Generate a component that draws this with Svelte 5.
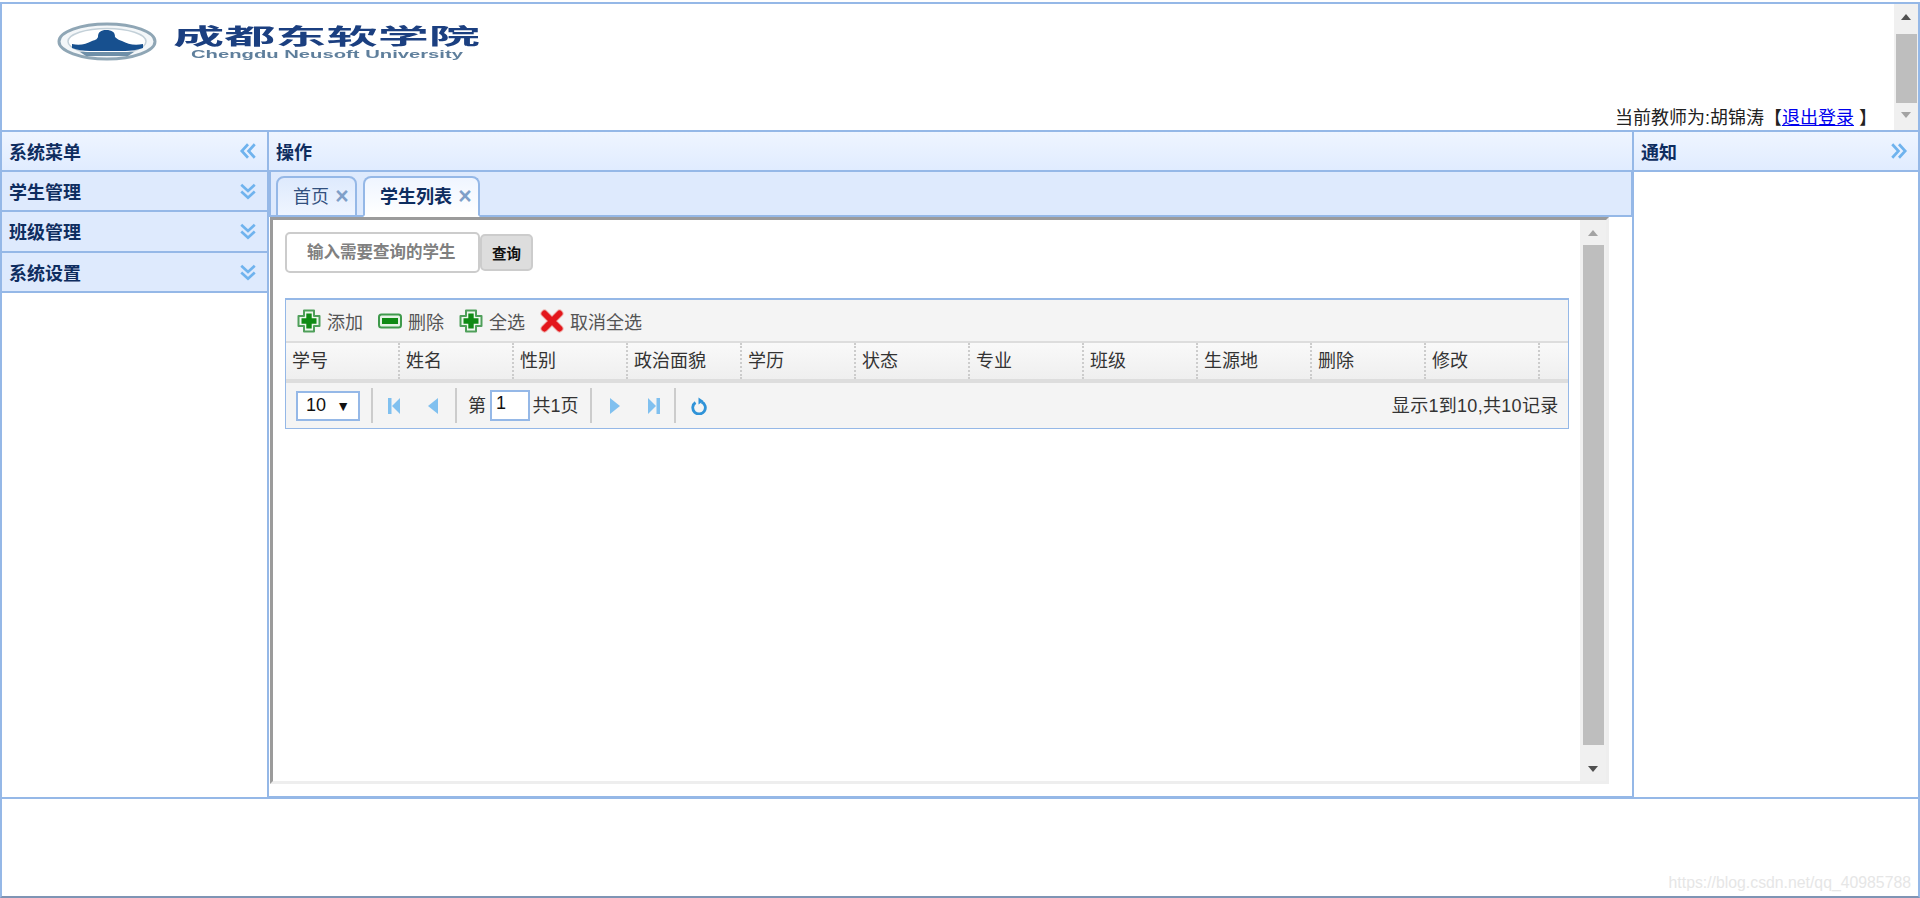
<script lang="ts">
  const menus = ['学生管理', '班级管理', '系统设置'];
  const columns = ['学号', '姓名', '性别', '政治面貌', '学历', '状态', '专业', '班级', '生源地', '删除', '修改'];
</script>

{#snippet plusIcon()}
  <svg class="tool-icon" viewBox="0 0 24 24">
    <path d="M7 1.500h10v5.500h5.500v10H17v5.500H7V17H1.500V7H7z" fill="#eef7ee" stroke="#4f9f5a" stroke-width="2" stroke-linejoin="round" />
    <path d="M9.300 4.500h5.400v4.800h4.800v5.400h-4.800v4.800H9.300v-4.800H4.500V9.300h4.800z" fill="#0f8a14" />
  </svg>
{/snippet}

{#snippet chevrons(d)}
  <svg class="chev" viewBox="0 0 16 16"><path {d} fill="none" stroke="#6fb3ee" stroke-width="2.400" /></svg>
{/snippet}

<div class="page">
  <div class="frame">
    <header class="top">
      <div class="top-main">
        <svg class="logo" viewBox="0 0 460 50" aria-label="成都东软学院">
          <g class="logo-soft">
            <ellipse cx="53" cy="27.500" rx="48" ry="17.500" fill="#f4f7f9" stroke="#8fa6b5" stroke-width="3" />
            <ellipse cx="53" cy="27.500" rx="39" ry="13" fill="#fff" stroke="#c3d0d8" stroke-width="1.500" />
            <path d="M18 30c8 2 14 0 20-3 4-1 5-2 6-4 0-5 3-7 8-7 6 0 9 2 9 7 2 2 4 3 7 4 6 3 12 5 21 3v4c-6 2-12 3-18 3H36c-7 0-13-1-18-3z" fill="#17508f" />
            <path d="M26 38h54l-6 4H32z" fill="#6e8fa8" />
          </g>
          <text class="logo-cn" x="119" y="30" textLength="307" lengthAdjust="spacingAndGlyphs">成都东软学院</text>
          <text class="logo-en" x="137" y="44" textLength="272" lengthAdjust="spacingAndGlyphs">Chengdu Neusoft University</text>
        </svg>
        <div class="teacher">当前教师为:胡锦涛【<a href="#logout">退出登录</a> 】</div>
      </div>
      <div class="vscroll header-scroll">
        <span class="arrow up dark"></span>
        <span class="thumb"></span>
        <span class="arrow down light"></span>
      </div>
    </header>

    <main class="body">
      <aside class="west">
        <div class="panel-head">
          <span>系统菜单</span>
          {@render chevrons('M8 2L2.500 8 8 14M14 2L8.500 8 14 14')}
        </div>
        {#each menus as menu}
          <div class="menu-row">
            <span>{menu}</span>
            {@render chevrons('M2 2.500l6 5.500 6-5.500M2 8.500l6 5.500 6-5.500')}
          </div>
        {/each}
      </aside>

      <section class="center">
        <div class="panel-head"><span>操作</span></div>
        <div class="tabs">
          <div class="tab">首页<span class="close">×</span></div>
          <div class="tab active">学生列表<span class="close">×</span></div>
        </div>
        <div class="frame-wrap">
          <div class="inset">
            <div class="content">
              <div class="search">
                <div class="search-input">输入需要查询的学生</div>
                <button class="search-btn">查询</button>
              </div>

              <div class="grid">
                <div class="toolbar">
                  <div class="tool">{@render plusIcon()}添加</div>
                  <div class="tool">
                    <svg class="tool-icon" viewBox="0 0 24 24">
                      <rect x="1" y="5.500" width="22" height="13" rx="2.500" fill="#e6f3e6" stroke="#3f9a4c" stroke-width="2" />
                      <rect x="4" y="9" width="16" height="6" fill="#0f8a14" />
                    </svg>
                    删除
                  </div>
                  <div class="tool">{@render plusIcon()}全选</div>
                  <div class="tool">
                    <svg class="tool-icon" viewBox="0 0 24 24">
                      <path d="M4.500 4.500l15 15M19.500 4.500l-15 15" fill="none" stroke="#eeb4b0" stroke-width="8" stroke-linecap="round" />
                      <path d="M4.500 4.500l15 15M19.500 4.500l-15 15" fill="none" stroke="#e3161b" stroke-width="6" stroke-linecap="round" />
                    </svg>
                    取消全选
                  </div>
                </div>

                <div class="thead">
                  {#each columns as col}
                    <div class="th">{col}</div>
                  {/each}
                </div>

                <div class="pager">
                  <div class="page-size"><span>10</span><span class="caret">▼</span></div>
                  <span class="sep"></span>
                  <svg class="pg first" viewBox="0 0 12 16"><path d="M0 0h3.500v16H0zM12 0v16L4 8z" fill="#80c0ef" /></svg>
                  <svg class="pg prev" viewBox="0 0 10 16"><path d="M10 0v16L0 8z" fill="#80c0ef" /></svg>
                  <span class="sep"></span>
                  <span class="pg-label">第</span>
                  <div class="pg-input">1</div>
                  <span class="pg-total">共1页</span>
                  <span class="sep"></span>
                  <svg class="pg next" viewBox="0 0 10 16"><path d="M0 0v16l10-8z" fill="#80c0ef" /></svg>
                  <svg class="pg last" viewBox="0 0 12 16"><path d="M8.500 0H12v16H8.500zM0 0v16l8-8z" fill="#80c0ef" /></svg>
                  <span class="sep"></span>
                  <svg class="pg refresh" viewBox="0 0 16 18">
                    <path d="M4.500 5.500a6.300 6.300 0 1 0 6 -.6" fill="none" stroke="#2f93d8" stroke-width="2.800" />
                    <path d="M7.500 0.500v7l5-3.500z" fill="#2f93d8" />
                  </svg>
                  <span class="summary">显示1到10,共10记录</span>
                </div>
              </div>
            </div>
            <div class="vscroll frame-scroll">
              <span class="arrow up light"></span>
              <span class="thumb"></span>
              <span class="arrow down dark"></span>
            </div>
          </div>
        </div>
      </section>

      <aside class="east">
        <div class="panel-head">
          <span>通知</span>
          {@render chevrons('M2 2l5.500 6L2 14M8 2l5.500 6L8 14')}
        </div>
      </aside>
    </main>

    <footer class="foot"></footer>
  </div>
  <div class="watermark">https://blog.csdn.net/qq_40985788</div>
</div>

<style>
  :global(body) {
    margin: 0;
    background: #fff;
  }

  .page {
    position: relative;
    box-sizing: border-box;
    height: 898px;
    padding-top: 2px;
    font-family: "Liberation Sans", "Noto Sans CJK SC", sans-serif;
    font-size: 18px;
    color: #222;
    overflow: hidden;
  }

  .frame {
    box-sizing: border-box;
    height: 896px;
    display: flex;
    flex-direction: column;
    border: 2px solid #95b8e7;
    border-bottom-color: #7f94b4;
  }

  /* header */
  .top {
    height: 126px;
    display: flex;
    border-bottom: 2px solid #95b8e7;
    flex: none;
  }

  .top-main {
    flex: 1;
    display: flex;
    flex-direction: column;
    justify-content: space-between;
    padding: 10px 0 0 0;
    min-width: 0;
  }

  .logo {
    display: block;
    width: 460px;
    height: 50px;
    margin-left: 52px;
  }

  .logo-soft,
  .logo-cn,
  .logo-en {
    filter: blur(0.5px);
  }

  .logo-cn {
    font-family: "Noto Sans CJK SC", sans-serif;
    font-size: 22px;
    font-weight: 700;
    fill: #1b3f80;
  }

  .logo-en {
    font-family: "Liberation Sans", sans-serif;
    font-size: 10px;
    font-weight: 700;
    fill: #5f7f9c;
  }

  .teacher {
    align-self: flex-end;
    margin-right: 17px;
    line-height: 23px;
    color: #222;
    white-space: pre;
  }

  .teacher a {
    color: #0000ee;
  }

  .vscroll {
    box-sizing: border-box;
    width: 24px;
    flex: none;
    background: #f0f0f0;
    display: flex;
    flex-direction: column;
    align-items: center;
  }

  .thumb {
    display: block;
    width: 21px;
    background: #bebebe;
  }

  .arrow {
    display: block;
    width: 0;
    height: 0;
    border-left: 5.500px solid transparent;
    border-right: 5.500px solid transparent;
  }

  .arrow.up.dark {
    border-bottom: 6px solid #505050;
  }

  .arrow.up.light {
    border-bottom: 6px solid #a3a3a3;
  }

  .arrow.down.dark {
    border-top: 6px solid #505050;
  }

  .arrow.down.light {
    border-top: 6px solid #a3a3a3;
  }

  .header-scroll .up {
    margin-top: 10px;
  }

  .header-scroll .thumb {
    height: 69px;
    margin: 14px 0 9px;
  }

  .frame-scroll {
    width: 26px;
  }

  .frame-scroll .up {
    margin-top: 10px;
  }

  .frame-scroll .thumb {
    height: 500px;
    margin: 9px 0 21px;
  }

  /* three columns */
  .body {
    flex: 1;
    min-height: 0;
    display: grid;
    grid-template-columns: 265px 1367px 1fr;
  }

  .panel-head {
    box-sizing: border-box;
    height: 40px;
    padding: 0 10px 0 7px;
    display: flex;
    align-items: center;
    justify-content: space-between;
    border-bottom: 2px solid #95b8e7;
    background: linear-gradient(to bottom, #eff5ff, #e0ecff);
    color: #0e2d5f;
    font-weight: 700;
  }

  .chev {
    display: block;
    width: 18px;
    height: 18px;
    flex: none;
  }

  .menu-row {
    box-sizing: border-box;
    height: 40.300px;
    padding: 0 10px 0 7px;
    display: flex;
    align-items: center;
    justify-content: space-between;
    border-bottom: 2px solid #95b8e7;
    background: #deeafd;
    color: #0e2d5f;
    font-weight: 700;
  }

  .center {
    display: flex;
    flex-direction: column;
    min-height: 0;
    margin-bottom: -1px;
    border-left: 2px solid #95b8e7;
    border-right: 2px solid #95b8e7;
    border-bottom: 2px solid #95b8e7;
  }

  .tabs {
    box-sizing: border-box;
    height: 45px;
    display: flex;
    align-items: flex-end;
    gap: 6px;
    padding-left: 5px;
    margin-right: -1px;
    background: #deeafd;
    border-left: 2px solid #95b8e7;
    border-right: 2px solid #95b8e7;
    border-bottom: 2px solid #95b8e7;
    flex: none;
  }

  .tab {
    box-sizing: border-box;
    height: 41px;
    margin-bottom: -2px;
    padding: 0 8px 0 15px;
    display: flex;
    align-items: center;
    gap: 8px;
    border: 2px solid #95b8e7;
    border-radius: 8px 8px 0 0;
    background: linear-gradient(to bottom, #deeafd, #eff5ff);
    color: #32507e;
    line-height: 34px;
  }

  .tab.active {
    background: linear-gradient(to bottom, #eff5ff, #fff);
    border-bottom-color: #fff;
    color: #0e2d5f;
    font-weight: 700;
  }

  .close {
    width: 10px;
    display: flex;
    justify-content: center;
    font-size: 23px;
    font-weight: 700;
    line-height: 1;
    color: #7f9fc8;
  }

  .frame-wrap {
    flex: 1;
    min-height: 0;
    display: flex;
    padding: 0 23px 12px 1px;
  }

  .inset {
    flex: 1;
    min-width: 0;
    display: flex;
    border: 3px solid;
    border-color: #9b9b9b #eee #eee #9b9b9b;
  }

  .content {
    flex: 1;
    min-width: 0;
    padding: 12px 12px 0 12px;
  }

  .search {
    display: flex;
    align-items: center;
    height: 41px;
  }

  .search-input {
    box-sizing: border-box;
    width: 195px;
    height: 41px;
    padding-left: 20px;
    line-height: 37px;
    border: 2px solid #ccc;
    border-radius: 5px;
    font-size: 16.500px;
    font-weight: 700;
    color: #808080;
    white-space: nowrap;
  }

  .search-btn {
    box-sizing: border-box;
    width: 53px;
    height: 37px;
    padding: 0;
    border: 2px solid #ccc;
    border-radius: 5px;
    background: #ddd;
    font-family: inherit;
    font-size: 14.500px;
    font-weight: 700;
    color: #111;
  }

  .grid {
    box-sizing: border-box;
    margin-top: 25px;
    width: 1284px;
    border: 1px solid #95b8e7;
    border-top-width: 2px;
    background: #f4f4f4;
  }

  .toolbar {
    height: 41px;
    padding-left: 11px;
    display: flex;
    align-items: center;
    gap: 15px;
    color: #555;
  }

  .tool {
    display: flex;
    align-items: center;
    gap: 6px;
  }

  .tool-icon {
    display: block;
    width: 24px;
    height: 24px;
    flex: none;
  }

  .thead {
    box-sizing: border-box;
    height: 42px;
    display: flex;
    border-top: 2px solid #ddd;
    border-bottom: 4px solid #ddd;
    background: linear-gradient(to bottom, #f9f9f9, #efefef);
    color: #333;
  }

  .th {
    box-sizing: border-box;
    width: 114px;
    padding-left: 6px;
    line-height: 36px;
    border-right: 2px dotted #ccc;
    flex: none;
  }

  .pager {
    height: 45px;
    padding-left: 10px;
    display: flex;
    align-items: center;
    color: #333;
  }

  .page-size {
    box-sizing: border-box;
    width: 64px;
    height: 30px;
    padding: 0 8px 0 8px;
    display: flex;
    align-items: center;
    justify-content: space-between;
    border: 2px solid #95b8e7;
    background: #fff;
    color: #111;
  }

  .caret {
    font-size: 14px;
  }

  .sep {
    display: block;
    width: 2px;
    height: 35px;
    background: #ccc;
    flex: none;
  }

  .page-size + .sep {
    margin-left: 11px;
    margin-right: 15px;
  }

  .pg {
    display: block;
    height: 16px;
    flex: none;
  }

  .first,
  .last {
    width: 12px;
  }

  .prev,
  .next {
    width: 10px;
  }

  .first {
    margin-right: 28px;
  }

  .prev {
    margin-right: 17px;
  }

  .prev + .sep {
    margin-right: 11px;
  }

  .pg-label,
  .pg-total,
  .summary {
    padding-bottom: 3px;
  }

  .pg-input {
    box-sizing: border-box;
    width: 40px;
    height: 31px;
    margin: 0 2.500px 0 4px;
    padding-left: 4px;
    line-height: 23px;
    border: 2px solid #95b8e7;
    background: #fff;
    color: #111;
  }

  .pg-total {
    margin-right: 11px;
  }

  .pg-total + .sep {
    margin-right: 18px;
  }

  .next {
    margin-right: 28px;
  }

  .last {
    margin-right: 14px;
  }

  .last + .sep {
    margin-right: 15px;
  }

  .refresh {
    width: 16px;
    height: 18px;
  }

  .summary {
    margin-left: auto;
    padding-right: 9.500px;
    letter-spacing: 0.300px;
  }

  .foot {
    height: 97px;
    flex: none;
    border-top: 2px solid #95b8e7;
  }

  .watermark {
    position: absolute;
    right: 9px;
    bottom: 6px;
    font-size: 15.800px;
    color: #e6e6e6;
    white-space: nowrap;
  }
</style>
